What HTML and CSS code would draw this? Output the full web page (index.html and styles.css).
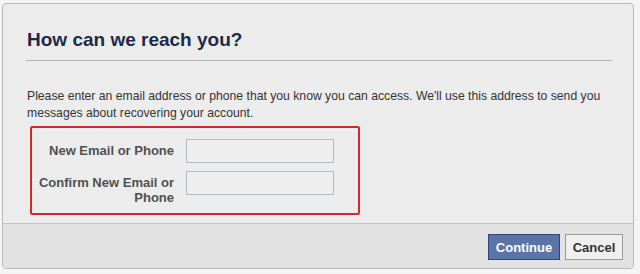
FILE: index.html
```html
<!DOCTYPE html>
<html>
<head>
<meta charset="utf-8">
<link rel="stylesheet" href="styles.css">
</head>
<body>
<div class="dialog">
  <div class="dialog-body">
    <h2 class="title">How can we reach you?</h2>
    <p class="intro">Please enter an email address or phone that you know you can access. We'll use this address to send you messages about recovering your account.</p>
    <div class="highlight">
      <div class="row">
        <label class="label">New Email or Phone</label>
        <input class="field" type="text">
      </div>
      <div class="row">
        <label class="label">Confirm New Email or Phone</label>
        <input class="field" type="text">
      </div>
    </div>
  </div>
  <div class="dialog-footer">
    <button class="btn btn-primary">Continue</button>
    <button class="btn btn-secondary">Cancel</button>
  </div>
</div>
</body>
</html>
```
FILE: styles.css
```css
html, body {
  margin: 0;
  padding: 0;
  background: #f4f4f4;
}
body {
  font-family: "Liberation Sans", Arial, sans-serif;
  font-size: 12px;
  color: #333;
}
.dialog {
  margin: 3px 6px 5px 2px;
  width: 630px;
  border: 1px solid #b8b8b8;
  border-radius: 4px;
  background: #ececec;
  overflow: hidden;
}
.dialog-body {
  padding: 24px 21px 8px 23px;
}
.title {
  margin: 0;
  font-size: 19px;
  line-height: 24px;
  font-weight: bold;
  color: #1c2a4a;
  padding: 0 0 8px 1px;
  border-bottom: 1px solid #b4b4b4;
}
.intro {
  margin: 0;
  padding: 27px 0 0 1px;
  font-size: 12.2px;
  line-height: 17px;
}
.highlight {
  margin-top: 4px;
  margin-left: 4px;
  width: 326px;
  border: 2px solid #d8262c;
  border-radius: 2px;
  padding: 11px 0 8px 0;
  display: flex;
  flex-direction: column;
  gap: 8px;
}
.row {
  display: flex;
  align-items: flex-start;
  gap: 12px;
}
.label {
  width: 140px;
  margin-left: 2px;
  text-align: right;
  font-weight: bold;
  color: #505050;
  font-size: 13px;
  line-height: 15px;
  padding-top: 4px;
}
.field {
  width: 148px;
  height: 24px;
  box-sizing: border-box;
  margin: 0;
  border: 1px solid #b6bcc4;
  background: #eeeeee;
  font-family: inherit;
}
.dialog-footer {
  border-top: 1px solid #c4c4c4;
  background: #e2e2e2;
  padding: 10px 10px 8px 0;
  display: flex;
  justify-content: flex-end;
  gap: 5px;
}
.btn {
  height: 26px;
  box-sizing: border-box;
  font-family: inherit;
  font-size: 13px;
  font-weight: bold;
  padding: 0 6px;
  margin: 0;
}
.btn-primary {
  width: 72px;
  background: #5b74a8;
  border: 1px solid #29447e;
  color: #ffffff;
}
.btn-secondary {
  width: 58px;
  background: #efefef;
  border: 1px solid #9a9a9a;
  color: #333;
}
```
